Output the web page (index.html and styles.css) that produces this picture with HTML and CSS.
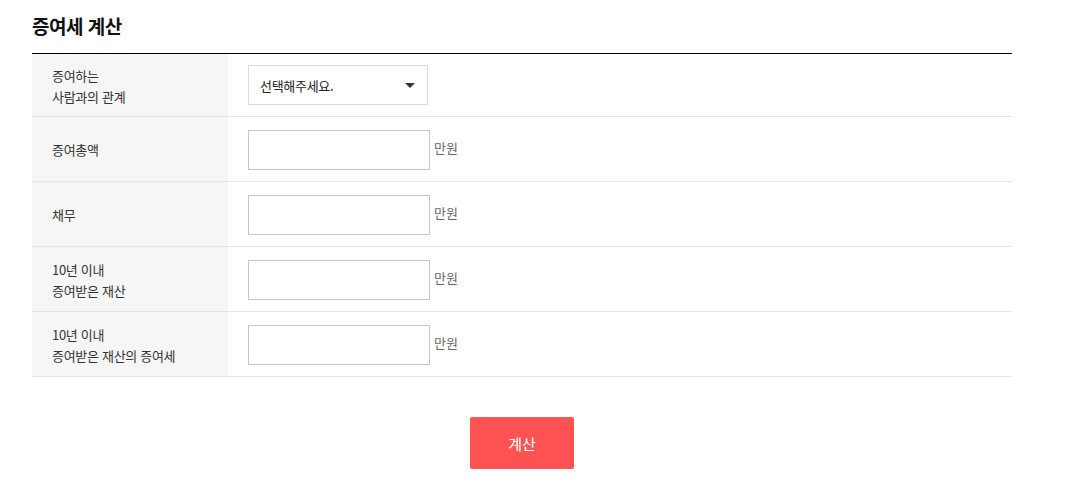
FILE: index.html
```html
<!DOCTYPE html>
<html lang="ko">
<head>
<meta charset="utf-8">
<link rel="stylesheet" href="styles.css">
</head>
<body>
<div class="wrap">
  <h2 class="title">증여세 계산</h2>
  <div class="form">
    <div class="row row-first">
      <div class="label">증여하는<br>사람과의 관계</div>
      <div class="field">
        <div class="select"><span>선택해주세요.</span><i class="arrow"></i></div>
      </div>
    </div>
    <div class="row">
      <div class="label">증여총액</div>
      <div class="field"><input class="input" type="text"><span class="unit">만원</span></div>
    </div>
    <div class="row">
      <div class="label">채무</div>
      <div class="field"><input class="input" type="text"><span class="unit">만원</span></div>
    </div>
    <div class="row">
      <div class="label">10년 이내<br>증여받은 재산</div>
      <div class="field"><input class="input" type="text"><span class="unit">만원</span></div>
    </div>
    <div class="row">
      <div class="label">10년 이내<br>증여받은 재산의 증여세</div>
      <div class="field"><input class="input" type="text"><span class="unit">만원</span></div>
    </div>
  </div>
  <div class="actions"><button class="btn">계산</button></div>
</div>
</body>
</html>
```
FILE: styles.css
```css
* { box-sizing: border-box; }
html, body { margin: 0; padding: 0; background: #fff; }
body {
  font-family: "Noto Sans CJK KR", "Noto Sans", sans-serif;
  color: #333;
}
.wrap {
  width: 980px;
  margin-left: 32px;
  padding-top: 12px;
}
.title {
  margin: 0;
  font-size: 19px;
  font-weight: 700;
  color: #111;
  line-height: 28px;
  height: 41px;
  letter-spacing: -0.5px;
}
.form {
  border-top: 1px solid #000;
}
.row {
  display: grid;
  grid-template-columns: 196px 1fr;
  height: 65px;
  border-bottom: 1px solid #e5e5e5;
}
.row-first { height: 63px; }
.label {
  background: #f6f6f6;
  padding-left: 20px;
  padding-top: 1px;
  font-size: 13px;
  line-height: 21px;
  letter-spacing: -0.3px;
  color: #333;
  display: flex;
  align-items: center;
}
.field {
  display: flex;
  align-items: center;
  padding-left: 20px;
}
.select {
  width: 180px;
  height: 40px;
  border: 1px solid #dcdcdc;
  display: flex;
  align-items: center;
  justify-content: space-between;
  padding: 0 11px 0 11px;
  font-size: 13px;
  color: #222;
  letter-spacing: -0.3px;
}
.arrow {
  width: 0;
  height: 0;
  border-left: 5px solid transparent;
  border-right: 5px solid transparent;
  border-top: 5px solid #333;
  margin-right: 1px;
}
.input {
  width: 182px;
  height: 40px;
  border: 1px solid #c6c6c6;
  margin: 2px 0 0 0;
  padding: 0 8px;
  font: inherit;
  outline: none;
}
.unit {
  margin-left: 4px;
  margin-bottom: 3px;
  font-size: 13px;
  color: #666;
}
.actions {
  display: flex;
  justify-content: center;
  padding-top: 40px;
}
.btn {
  width: 104px;
  height: 52px;
  border: 0;
  border-radius: 2px;
  background: #ff5353;
  color: #fff;
  font-family: "Noto Sans CJK KR", "Noto Sans", sans-serif;
  font-size: 15px;
  cursor: pointer;
}
```
